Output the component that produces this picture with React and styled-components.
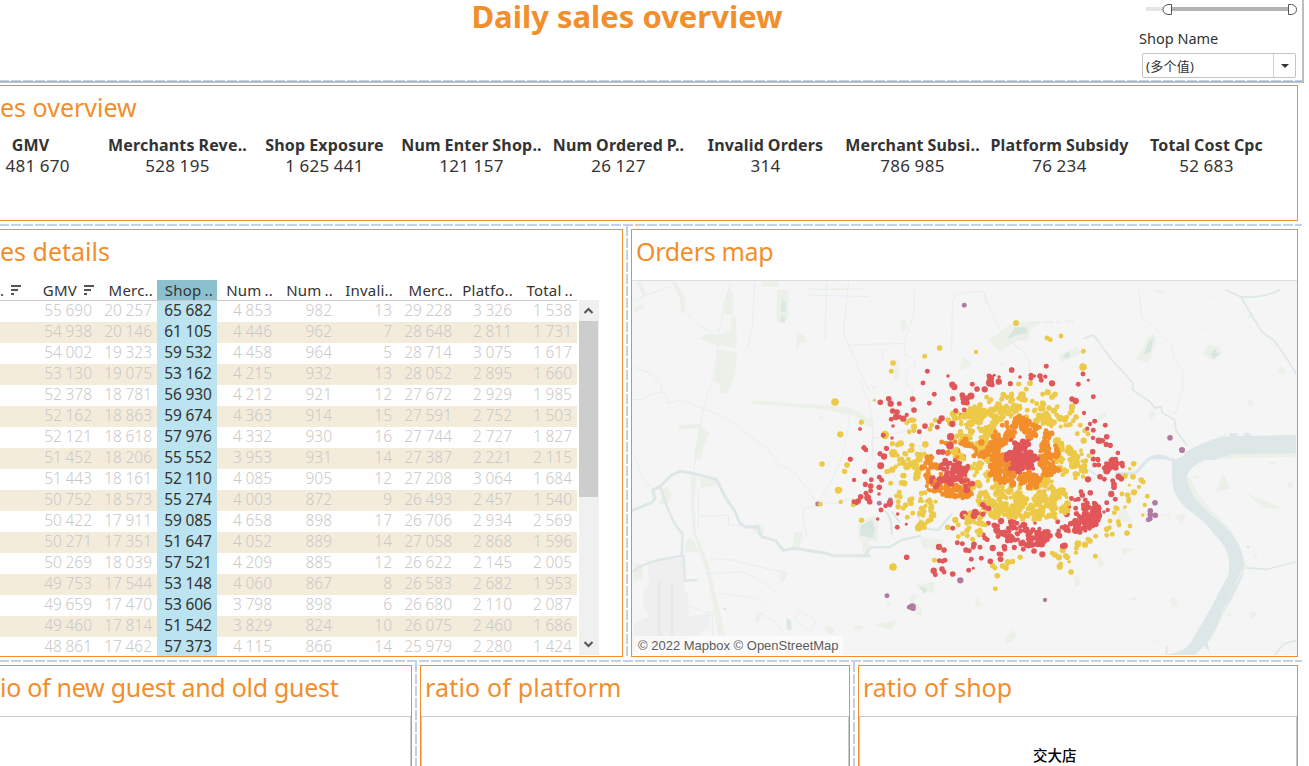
import React from "react";
import styled, { createGlobalStyle } from "styled-components";

const ORANGE = "#f28e2b";
const RED = "#e15759";
const YELLOW = "#edc948";
const PURPLE = "#b07aa1";

const Global = createGlobalStyle`
  * { box-sizing: border-box; }
  body { margin: 0; background: #fff; font-family: "Noto Sans", "Noto Sans CJK SC", sans-serif; color: #333; overflow: hidden; }
`;
const Page = styled.div`width: 1309px; height: 766px; overflow: hidden; display: flex; flex-direction: column;`;
const Header = styled.header`
  width: 1304px; height: 83px; flex: none; display: flex; justify-content: flex-end;
  border-right: 2px solid #bdbdbd; border-bottom: 2px solid #c3c3c3;
`;
const PageTitle = styled.h1`
  flex: 1; margin: 0 0 0 114px; text-align: center; color: ${ORANGE};
  font-size: 31px; line-height: 32px; font-weight: 700;
`;
const Filters = styled.div`width: 163px; margin-left: -1px; display: flex; flex-direction: column;`;
const Slider = styled.svg`display: block; width: 155px; height: 18px; margin-left: 6px;`;
const FilterLabel = styled.div`margin-top: 10px; font-size: 14.5px; line-height: 21px; white-space: nowrap;`;
const Select = styled.div`
  width: 154px; height: 25px; margin: 4px 0 0 3px; border: 1px solid #c4c4c4; border-radius: 2px;
  display: flex; font: 13px/24px "Noto Sans", "Noto Sans CJK SC", sans-serif;
`;
const SelectText = styled.span`flex: 1; padding-left: 3px; letter-spacing: 0.3px;`;
const SelectArrow = styled.span`
  width: 22px; border-left: 1px solid #d4d4d4; display: flex; align-items: center; justify-content: center;
  &::after { content: ""; border: 4px solid transparent; border-top: 4px solid #333; border-bottom: 0; }
`;
const RowDash = styled.div`
  flex: none; height: 2px; width: 1302px; margin: ${(p) => p.$m || "3px 0"}; position: relative;
  --dash: rgba(140, 165, 208, 0.52);
  background: repeating-linear-gradient(90deg, var(--dash) 0 9px, transparent 9px 11px, var(--dash) 11px 12px);
`;
const ColDash = styled.div`
  flex: none; width: 2px; margin: -3px 3px 0 3px;
  background: repeating-linear-gradient(180deg, #c2cee4 0 10px, transparent 10px 12px);
`;
const Row = styled.div`flex: none; display: flex; width: 1298px; height: ${(p) => p.$h}px;`;
const Panel = styled.section`
  flex: none; width: ${(p) => p.$w}px; height: ${(p) => p.$h}px; overflow: hidden; display: flex; flex-direction: column;
  border: 1px solid ${ORANGE}; border-left-width: ${(p) => (p.$cut ? 0 : 1)}px;
  border-bottom-width: ${(p) => (p.$open ? 0 : 1)}px;
`;
const PanelTitle = styled.h2`
  flex: none; margin: 0; height: 50px; padding-left: ${(p) => p.$x ?? 4}px;
  color: ${ORANGE}; font-size: 25px; line-height: 43px; font-weight: 400; white-space: nowrap;
  letter-spacing: ${(p) => p.$track || 0}px;
`;
const Body = styled.div`flex: 1; border: 1px solid #c8c8c8; border-width: 1px 1px 0 ${(p) => (p.$cut ? 0 : 1)}px;`;
const PieLabel = styled.div`margin: 27px 0 0 173px; color: #000; font: 500 14.5px/22px "Noto Sans CJK SC", sans-serif;`;

const Totals = styled.div`display: grid; grid-template-columns: repeat(9, 147px); margin: -1px 0 0 -43px;`;
const Total = styled.div`text-align: center; white-space: nowrap;`;
const TotalName = styled.div`font-weight: 700; font-size: 16px; line-height: 21px; word-spacing: -0.5px; letter-spacing: 0.18px;`;
const TotalValue = styled.div`font-size: 17px; line-height: 19px; word-spacing: -0.5px; letter-spacing: 0.3px;`;

const TableArea = styled.div`flex: 1; display: flex; min-height: 0;`;
const Table = styled.div`width: 577px; flex: none; overflow: hidden;`;
const TRow = styled.div`
  display: grid; grid-template-columns: 37px repeat(9, 60px); height: 21px;
  background: ${(p) => (p.$band ? "#f4ecdb" : "#fff")};
`;
const HeadRow = styled(TRow)`border-bottom: 1px solid #c8c8c8;`;
const Cell = styled.div`
  text-align: right; padding-right: 5px; font-size: 15.5px; line-height: 19px; font-weight: ${(p) => (p.$on ? 400 : 300)};
  color: ${(p) => (p.$on ? "#333" : "#c9c9c9")}; background: ${(p) => (p.$on ? "#bbe3f0" : "transparent")};
  word-spacing: -0.5px; white-space: nowrap;
`;
const HeadCell = styled(Cell)`
  color: #333; font-weight: 400; font-size: 15px; line-height: 20px; letter-spacing: 0.2px; word-spacing: -1px;
  display: flex; align-items: center; justify-content: flex-end; gap: 7px;
  padding-right: ${(p) => (p.$sort ? 3 : 4)}px; background: ${(p) => (p.$on ? "#8cc0cf" : "transparent")};
`;
const FirstHead = styled(HeadCell)`padding-right: 16px;`;
const Scroll = styled.div`width: 20px; height: 355px; margin: 20px 0 0 2px; background: #f0f0f0; display: flex; flex-direction: column;`;
const ScrollBtn = styled.svg`display: block; width: 20px; height: 21px; flex: none;`;
const Thumb = styled.div`width: 19px; height: 176px; background: #cdcdcd; margin-bottom: auto;`;

const MapBox = styled.div`height: 376px; position: relative; background: #f5f5f5; border-top: 1px solid #dedede; border-bottom: 1px solid #fff;`;
const MapSvg = styled.svg`display: block; width: 665px; height: 374px;`;
const Credit = styled.div`
  position: absolute; left: 2px; bottom: 0; height: 19px; padding: 0 4px; background: rgba(255,255,255,.6);
  color: #5c5c5c; font: 13px/19px "Liberation Sans", Arial, sans-serif; white-space: nowrap;
`;

const totals = [
  ["GMV", "1 481 670"], ["Merchants Reve..", "528 195"], ["Shop Exposure", "1 625 441"],
  ["Num Enter Shop..", "121 157"], ["Num Ordered P..", "26 127"], ["Invalid Orders", "314"],
  ["Merchant Subsi..", "786 985"], ["Platform Subsidy", "76 234"], ["Total Cost Cpc", "52 683"],
];
const heads = ["GMV", "Merc..", "Shop ..", "Num ..", "Num ..", "Invali..", "Merc..", "Platfo..", "Total .."];
const rows = `55690 20257 65682 4853 982 13 29228 3326 1538
54938 20146 61105 4446 962 7 28648 2811 1731
54002 19323 59532 4458 964 5 28714 3075 1617
53130 19075 53162 4215 932 13 28052 2895 1660
52378 18781 56930 4212 921 12 27672 2929 1985
52162 18863 59674 4363 914 15 27591 2752 1503
52121 18618 57976 4332 930 16 27744 2727 1827
51452 18206 55552 3953 931 14 27387 2221 2115
51443 18161 52110 4085 905 12 27208 3064 1684
50752 18573 55274 4003 872 9 26493 2457 1540
50422 17911 59085 4658 898 17 26706 2934 2569
50271 17351 51647 4052 889 14 27058 2868 1596
50269 18039 57521 4209 885 12 26622 2145 2005
49753 17544 53148 4060 867 8 26583 2682 1953
49659 17470 53606 3798 898 6 26680 2110 2087
49460 17814 51542 3829 824 10 26075 2460 1686
48861 17462 57373 4115 866 14 25979 2280 1424`.split("\n").map((l) => l.split(" "));
const fmt = (v) => v.replace(/(\d)(\d{3})$/, "$1 $2");

/* Order locations, per map tile: "x,y[,radius]" in tile units (three per pixel). */
const tiles = [
  { x: 630, y: 270, dots: [
    [PURPLE, "563,702,7"],
    [YELLOW, "615,396,11 694,457 631,493,9 576,582,8 651,585,8 643,604 625,661,10 632,696,6 571,703 670,704 694,751"],
    [RED, "690,477,5 702,534 707,539,6 661,568 704,604 672,630,6 706,643"],
  ] },
  { x: 860, y: 290, dots: [
    [PURPLE, "313,46,7"],
    [YELLOW, "468,99,8 239,174,8 194,199 348,186,6 99,219,8 94,244 43,331,4 4,397 75,435,12 380,322 393,329 388,335 430,314,8 425,328 440,322 452,320,8 455,312 462,345 475,283,6 476,325 468,350,10 465,365 421,353,8 420,368 435,366 155,390,8 162,391 148,392 140,398 162,410,9 162,422 148,425 215,405 210,418 226,391 97,461 122,460,9 112,465 155,466 196,463,9 100,490,12 137,493 172,493 157,481 125,507 145,508 175,503 280,372,10 265,390,8 270,400,8 285,385,9 292,368 330,357 318,365 360,345,8 358,358 360,370,9"],
    [ORANGE, "245,456 258,460 272,458 285,455 302,460 320,450 265,486 290,484,11 201,501,8 262,491 311,500 475,395,9 465,405 455,410 440,398 427,406"],
    [RED, "202,244 264,258,5 189,279 277,284,9 283,291,9 337,283 351,297,8 374,298,9 455,240 387,258 392,265,10 390,278,12 397,285 417,261,5 403,256,4 416,275,9 451,281 223,313 86,326,8 92,341,9 61,337,8 118,341 158,327,8 208,340 278,326,8 307,315,8 308,326 320,325,9 333,318,10 311,337,8 321,338,8 162,360,8 98,363,8 111,366,8 94,388 108,381,9 118,381 130,386,9 140,375,6 99,408,5 195,408,8 178,425 245,385,9 232,412 238,395 287,362 277,402,9 305,376 313,360 96,444,5 80,476 60,491 72,500,8 70,436 12,473 18,480,6 0,417,5 237,486 249,486 272,440,11 270,467,11 298,500"],
  ] },
  { x: 1000, y: 290, dots: [
    [PURPLE, "510,443,8 546,480,8"],
    [YELLOW, "48,99,8 141,144 151,149 183,138 250,184 249,231,11 57,282 90,280,8 79,298 10,313 22,322 35,315 66,315,11 75,330 128,313 143,307,9 165,313,8 156,321,8 97,334 110,341 128,339,8 127,358 172,350 162,362,9 180,385,10 216,350,9 215,362,8 210,370 200,382 228,381,8 220,392 241,406 232,431 254,422 264,432 251,452,9 211,403 170,375 115,375 105,360 82,361 103,363 122,380 145,390,12 155,398,10 60,355 50,363 40,350,8 38,330 5,360,9 3,385,9"],
    [RED, "35,240,8 139,229 60,261,5 93,256 93,265 103,258,5 120,258,8 136,260,6 124,271 156,280,9 31,281 249,252 235,283 265,271,4 216,327,8 227,333,9 280,320 252,369,6 284,394 316,406 270,402,6 262,416,6 280,421 279,444,6 296,452,9 308,452 320,440,8 319,463 331,467 354,489,6 278,485,8 280,507 293,508 337,508 347,508 31,446,9 87,444,9 80,458,8 0,275,5"],
  ] },
  { x: 840, y: 440, dots: [
    [PURPLE, "118,190,7 151,180 150,195 361,421,9 141,467,7 208,502 217,500,10 219,505,8"],
    [YELLOW, "157,11 173,14 183,10 160,40,12 213,30 217,17 256,13,9 178,60 190,68,9 212,72,10 200,80,10 230,75 235,60,8 223,65 241,60 243,87 21,75 14,95 2,150,5 40,194 152,130 185,128,8 193,130,9 157,89,9 145,94 140,95 170,168 178,157 181,170 175,185 210,180,8 213,190,8 197,195,8 175,200,8 190,205 216,176 218,220 202,232 65,241 323,262,8 346,240,9 355,255 380,250 355,290 368,281 382,287 398,298 417,285 283,361 159,381,11 458,377,8 465,384 488,378,8 503,366,8 518,365 498,385 472,407,8 466,446 540,352"],
    [RED, "72,24 78,30,6 31,58 120,42 132,49,9 139,25 122,77,10 73,95 42,120,5 118,112 125,121 76,134 92,138,8 94,119 118,142,8 92,152 78,160 117,162,5 62,170,8 83,173,10 55,183,8 42,185 50,188 89,185,8 150,188,9 137,197 123,210 173,222,5 113,237,5 172,262 199,253,4 296,36,8 308,36,8 338,265 297,321,9 312,330,8 315,361 308,364 298,362 281,392,9 286,404 306,387,8 312,396 338,402,8 352,308 367,311 378,330,8 388,332 402,313,8 400,322 420,322 394,358 424,355 451,364,8 386,391 400,385,4 200,352,8 458,324,9 493,320 494,328 477,342 482,358,8 523,323 463,256,8 470,270,10 485,280,9 445,250 513,245,9 530,250 500,290 508,300,6 515,298 528,300,5 530,280,6 518,265 505,265 435,295 430,285 442,299 372,225,13"],
    [YELLOW, "374,226,4"],
  ] },
  { x: 1000, y: 440, dots: [
    [PURPLE, "465,188,8 451,212,8 451,224,8 466,226,8 451,236 445,239 546,30,8 135,480,6"],
    [YELLOW, "401,71,8 389,86,5 375,108,8 399,110,8 388,136,4 424,120,8 430,126 417,141,6 402,157,9 366,162 383,165,8 386,178 386,184 442,169 434,195,6 428,225,5 347,203 352,206 343,218 375,201,5 330,243 355,245 357,255 390,258 328,263 320,268,8 320,286 337,283 381,279,8 287,289 270,303,8 264,298 234,311,10 255,314,9 229,325 228,338,6 286,349 213,396,8 188,330,9 197,347,8 202,352,8 207,365,5 182,372 179,380,9 165,345,8 177,352,9 157,340 61,352 38,364 24,367,9 18,383,8 8,378"],
    [RED, "302,2,8 318,14 331,16 353,39,6 278,35 280,58 294,60 284,75 296,75 320,93,10 300,110,8 264,118,9 313,118 338,122 356,110,9 364,116,8 342,133,8 342,142,8 334,162,9 346,178 271,158,8 243,155 247,165,8 235,178 256,180 262,190 206,200 227,205 250,195 255,205,11 293,203,10 320,188 323,210,6 312,216,5 293,215,10 118,218 200,222,9 127,343,9 102,333,8 70,328 13,320,8 43,322 3,343 0,357 194,317,9 188,318,8 173,245 3,243,9 42,247 72,255,9 78,269,10 42,262 105,249,5 62,273 14,282,9 27,274 30,290,10 53,282 22,303 33,302 45,300"],
  ] },
];

/* Dense districts: colour, centre, radii, rotation, point count. */
const districts = [
  [YELLOW, 982, 418, 14, 12, 0, 40], [YELLOW, 978, 428, 20, 20, 0, 95], [YELLOW, 1022, 411, 29, 13, 0, 50],
  [YELLOW, 1052, 421, 18, 7, .2, 28], [YELLOW, 1074, 462, 16, 18, 0, 52], [YELLOW, 1059, 450, 4, 20, 0, 24],
  [YELLOW, 1001, 501, 23, 17, 0, 150], [YELLOW, 1020, 513, 28, 8, 0, 60], [YELLOW, 1050, 503, 20, 14, -.3, 80], [YELLOW, 1035, 490, 30, 10, 0, 70],
  [YELLOW, 927, 509, 11, 20, 0, 40], [YELLOW, 976, 523, 12, 9, 0, 30], [YELLOW, 910, 465, 20, 13, .3, 20],
  [YELLOW, 970, 452, 22, 16, 0, 34], [YELLOW, 980, 475, 9, 14, 0, 18],
  [ORANGE, 1004, 438, 15, 7, -.8, 54], [ORANGE, 1022, 423, 12, 6, .2, 40], [ORANGE, 1035, 431, 16, 6, .4, 48],
  [ORANGE, 993, 450, 7, 11, 0, 34], [ORANGE, 1049, 457, 10, 18, 0, 95], [ORANGE, 1003, 468, 13, 14, 0, 120], [ORANGE, 1022, 479, 24, 6, 0, 65],
  [ORANGE, 968, 451, 22, 12, -.2, 26], [ORANGE, 932, 474, 10, 19, 0, 42], [ORANGE, 952, 491, 20, 6, .15, 62], [ORANGE, 964, 489, 8, 13, 0, 30],
  [RED, 1021, 456, 13, 15, .2, 115], [RED, 1030, 463, 10, 8, 0, 28], [RED, 1011, 456, 8, 6, 0, 12],
  [RED, 950, 472, 16, 12, 0, 50], [RED, 964, 474, 10, 14, 0, 22], [RED, 935, 483, 8, 7, 0, 8], [RED, 979, 511, 7, 7, 0, 8],
  [RED, 1114, 465, 13, 3.5, -.1, 24], [RED, 1080, 522, 21, 7, -.35, 66], [RED, 1095, 513, 5, 13, .2, 18],
  [RED, 1045, 535, 20, 8, -.35, 40], [RED, 1030, 543, 9, 4, 0, 16], [RED, 1018, 531, 30, 9, 0, 22], [RED, 1083, 507, 11, 12, 0, 12],
];
let seed = 7;
const rnd = () => { seed = (seed * 16807) % 2147483647; return seed / 2147483647; };
/* Orders gather round a few spots in each district, which leaves small gaps between them. */
const dense = districts.flatMap(([c, cx, cy, rx, ry, a, n]) => {
  const spots = [];
  return Array.from({ length: n }, (_, i) => {
    let u, v;
    if (i % 2 && spots.length) {
      const s = spots[Math.floor(rnd() * spots.length)];
      u = s[0] + (rnd() - 0.5) * 8;
      v = s[1] + (rnd() - 0.5) * 8;
    } else {
      const t = rnd() * Math.PI * 2, q = Math.sqrt(rnd());
      u = Math.cos(t) * q * rx;
      v = Math.sin(t) * q * ry;
      spots.push([u, v]);
    }
    return { c, x: cx + u * Math.cos(a) - v * Math.sin(a), y: cy + u * Math.sin(a) + v * Math.cos(a), r: 1.9 + rnd() * rnd() * 2 };
  });
});

function Terrain() {
  const water = { fill: "none", stroke: "#dee7e8", strokeLinejoin: "round", strokeLinecap: "round" };
  const road = { fill: "none", stroke: "#e6eceb", strokeWidth: 2.6 };
  return (
    <>
      <g transform="translate(630 270) scale(.33333)">
        <path fill="#efefef" d="M50 870 160 865 164 965 175 968 175 1040 240 1030 240 1065 200 1100 10 1130 10 1060 60 1040 40 1010 40 955 58 950Z" />
        <path stroke="#e9e9e9" strokeWidth="9" fill="none" d="M88 930V1100M126 935V1100" />
        <path fill="#ebf0e9" d="M124 36 140 36 165 85 165 125 153 128 150 82ZM294 55 311 70 307 135 281 133ZM303 138 318 138 320 234 262 226 210 208 230 190 262 198 302 180ZM262 237 320 248 317 310 290 374 268 366 272 342 253 338ZM366 390 660 412 700 435 718 450 718 470 680 440 580 418 364 402ZM147 466 205 460 236 490 222 530 212 570 192 566 195 540 206 505 205 475 148 478ZM182 614 200 618 192 700 198 790 232 870 250 940 266 1010 286 1097 265 1097 246 990 230 910 190 790 183 700ZM210 625 260 625 270 645 212 655ZM97 655 115 650 125 680 110 706 84 700 98 680ZM168 810 185 803 208 845 165 845ZM360 770 385 760 405 780 390 800ZM493 785 518 785 510 835 487 830ZM10 880 38 882 38 925 10 935ZM441 58 476 62 474 145 462 160 440 155ZM395 33 444 33 444 50 395 48ZM503 188 518 195 534 216 510 215 505 240 496 238ZM20 36 34 34 48 75 38 78ZM10 115 40 102 45 112 15 130ZM380 1030 396 1025 386 1060 375 1058ZM452 908 475 906 460 937 450 930ZM568 438 580 438 580 452 568 452ZM690 760 718 740 718 858 700 855ZM585 1072 600 1068 615 1078 610 1092 592 1090ZM672 1068 705 1068 690 1083ZM535 55 700 55 700 60 535 60Z" />
        <path fill="#dce9e2" d="M455 90 470 95 468 125 452 124ZM453 138 465 138 465 160 452 157ZM695 765 718 750 718 800 697 795ZM468 1045 483 1050 485 1080 472 1080ZM276 1015 290 1012 288 1023Z" />
        <path {...road} d="M10 92 70 67 125 48M165 125C190 155 225 180 262 200M303 35 285 95 272 165 263 200 262 260 248 330 220 412 205 500 190 614M374 35 367 165 352 235M10 290 60 310 95 345 90 366 60 375 38 390 10 388M90 366 105 372 116 400 155 388 200 410 245 425 285 442 345 487 415 540 446 582 490 605 520 642 555 690 610 702 665 690 718 680M660 412 655 470 637 560 600 640 567 692 555 710 520 715 520 750 530 790 505 825M590 36 584 210M656 36 640 190 718 365M535 75 718 80M650 225H720M10 548 40 630 73 662M205 660V775L190 770M210 740 295 735 295 765 340 768M238 865 310 870 360 885 470 908M225 912 340 905 395 935 440 965M262 968 380 985 408 1010M392 1028 440 1060 465 1097M170 1007 210 1020 220 1027 247 1028 247 1097M496 1040 510 1023 560 1050 540 1085 500 1055Z" />
        <path {...water} strokeWidth="9" d="M10 720 65 698 75 685 68 660 90 650 125 615 150 604 180 608 260 628 285 680 315 725 330 760 347 771 383 770 395 800 437 812 460 842 490 835 590 850 610 857 718 857" />
        <path {...water} strokeWidth="7" d="M92 655C108 700 120 750 158 792L155 855M10 902 40 885 85 870 160 857 165 932 200 930" />
      </g>
      <g transform="translate(860 290) scale(.33333)">
        <path fill="#ebf0e9" d="M123 90 138 92 142 118 125 125ZM66 178H71V208H66ZM103 212H116V271H103ZM308 202 320 205 332 218 330 232 297 240ZM387 150 450 105 480 110 480 148 420 185ZM370 2 384 38 375 43ZM0 375 38 388 38 412 0 400ZM32 284 48 290 40 298Z" />
        <path fill="#d9e8e2" d="M440 145 458 118 480 118 480 135 460 128 445 147Z" />
        <path {...road} d="M0 163 132 161 162 70V0M132 161 135 197C160 198 170 212 165 228C130 232 136 262 142 286 165 292 158 310 150 365M275 190 277 35 288 12 370 3 395 70 420 120 480 180M0 268 25 335 38 400V510M38 446 155 418M185 410 182 450" />
      </g>
      <g transform="translate(1000 290) scale(.33333)">
        <path fill="#ebf0e9" d="M0 125 35 100 85 93 130 94 95 115 82 152 40 150 0 184ZM132 92H162V100H132ZM168 92H180V100H168ZM195 88 222 92 222 98 197 98ZM175 195 232 170 242 190 185 217ZM440 145 465 128 468 155 446 218 405 207 430 175ZM606 190 625 165 655 168 668 190 640 212ZM845 230 860 243 847 255 831 243ZM752 326 764 338 752 350 741 338ZM455 357 467 374 452 391 443 374ZM297 375 316 363 318 380 297 392ZM455 0H492L488 12ZM628 12 645 20 640 25ZM738 80 755 70 765 76 745 87ZM610 116 620 112 622 120ZM640 440 680 433 675 445ZM640 508 710 488 888 486 888 500 700 505ZM0 216 15 220 0 230Z" />
        <path fill="#d7e6df" d="M25 140 45 112 80 112 83 130 50 135 25 148ZM190 197 205 185 212 198 200 207ZM445 158 460 145 452 185 430 195ZM622 188 632 192 645 178 650 188 660 190 652 196 640 208 636 198Z" />
        <path {...road} d="M416 0 425 80 470 120 515 165 525 210 548 240 548 300 525 372 500 360M25 150 70 185 88 215 88 245" />
        <path {...water} strokeWidth="5" d="M253 145 280 135 340 215 378 255 398 280 398 300 450 335 465 355 483 350 487 368 525 390 527 420 560 465M678 0 722 20 755 75 785 125 820 150 850 190 888 250M722 20C760 25 800 18 840 0" />
        <path fill="#dde7e7" d="M448 508C475 485 500 495 515 510H560L550 488C600 465 640 435 720 438L888 435V490L700 492 640 510ZM688 430H712V438H688ZM733 430H752V438H733Z" />
      </g>
      <g transform="translate(840 440) scale(.33333)">
        <path fill="#ebf0e9" d="M55 245 100 228 115 235 112 305 55 300ZM240 290 310 300 308 330 250 325ZM225 435 285 425 280 460 255 455ZM205 470 232 463 222 485 245 500 245 530 225 520ZM405 500 410 470 420 485 425 500ZM100 555 168 540 155 570ZM235 15 258 20 258 38 240 38ZM42 555 75 562 45 570ZM138 485 158 490 145 500Z" />
        <path fill="#d7e6df" d="M65 255 95 240 105 265 98 295 58 285ZM235 440 260 445 255 462Z" />
        <path {...road} d="M95 0 98 35 80 70V95M170 0V25M0 180 40 175M158 90 175 130 170 165" />
        <path {...water} strokeWidth="7" d="M0 347H75L90 322 150 321 185 300 240 288M138 215C155 235 155 255 155 280M157 217 178 245M232 225 255 265 295 270 335 222" />
      </g>
      <g transform="translate(1000 440) scale(.33333)">
        <path {...water} strokeWidth="5" d="M250 80 290 105M732 383 800 388 840 378 885 366M825 645 850 612 888 602M500 620V645" />
        <path {...water} strokeWidth="9" d="M350 100H405C430 80 440 45 480 48L525 62" />
        <path fill="#dde7e7" d="M515 65 640 0H888V38H690C610 55 560 80 562 115C568 155 590 175 620 200C665 240 690 265 705 295C725 325 733 350 732 385C730 425 690 480 665 535L622 610C625 620 630 640 635 642L612 617 585 645H495C580 630 570 600 600 560C630 510 650 470 685 405C690 360 690 330 640 280C600 220 550 215 525 160C515 135 517 110 515 65ZM737 320 750 316 745 328Z" />
        <path fill="#ebf0e9" d="M562 115 572 112C580 155 620 190 640 220 690 260 720 320 740 382L728 400 733 370C725 310 690 270 640 230 590 190 565 155 562 115ZM690 42H888V48H690ZM648 155 668 98 692 145ZM525 228 558 222 545 255ZM370 200 400 248 345 240ZM365 325 410 325 370 345ZM288 355 300 345 314 375 298 384ZM222 410 235 408 242 435 224 440ZM760 355 768 338 772 350ZM745 520 760 512 772 525 755 535ZM12 600 40 568 52 590 20 612ZM378 478 410 472 408 480ZM510 480 520 470 535 490 520 505ZM432 605 475 602 475 606ZM735 158 848 205 790 203ZM575 110 592 105 590 118ZM808 66H827V75H808ZM862 130 878 126 878 145 865 145ZM470 230 512 220 510 228ZM720 398 735 382 710 430 665 520 640 590 625 605 665 535ZM680 515 697 525 685 530Z" />
      </g>
    </>
  );
}

function Dots() {
  const all = [];
  tiles.forEach((t) => t.dots.forEach(([c, s]) => s.split(" ").forEach((p) => {
    const [x, y, r = 7] = p.split(",").map(Number);
    all.push({ c, x: t.x + x / 3, y: t.y + y / 3, r: r / 3 + 0.15 });
  })));
  return [...all, ...dense].map((d, i) => <circle key={i} cx={d.x.toFixed(1)} cy={d.y.toFixed(1)} r={d.r.toFixed(2)} fill={d.c} />);
}

const SortIcon = () => (
  <svg width="10" height="10" viewBox="0 0 10 10" shapeRendering="crispEdges"><path fill="#555" d="M0 0h10v2H0zM0 4h7v2H0zM0 8h3v2H0z" /></svg>
);

export default function App() {
  return (
    <Page>
      <Global />
      <Header>
        <PageTitle>Daily sales overview</PageTitle>
        <Filters>
          <Slider viewBox="0 0 155 18">
            <path fill="#e5e5e5" d="M1 7h18v4H1z" /><path fill="#b3b3b3" d="M27 7h116v4H27z" />
            <path fill="#fff" stroke="#555" d="M26.500 4.500H23q-5 1-5 5t5 5h3.500zM143.500 4.500h3q5 1 5 5t-5 5h-3z" />
          </Slider>
          <FilterLabel>Shop Name</FilterLabel>
          <Select><SelectText>(多个值)</SelectText><SelectArrow /></Select>
        </Filters>
      </Header>
      <RowDash $m="-3px 0 3px" />
      <Row $h={136}>
        <Panel $w={1298} $h={136} $cut>
          <PanelTitle $x={0}>es overview</PanelTitle>
          <Totals>
            {totals.map(([n, v]) => <Total key={n}><TotalName>{n}</TotalName><TotalValue>{v}</TotalValue></Total>)}
          </Totals>
        </Panel>
      </Row>
      <RowDash />
      <Row $h={428}>
        <Panel $w={623} $h={428} $cut>
          <PanelTitle $x={0}>es details</PanelTitle>
          <TableArea>
            <Table>
              <HeadRow>
                <FirstHead>.<SortIcon /></FirstHead>
                {heads.map((h, i) => <HeadCell key={i} $on={i === 2} $sort={i === 0}>{h}{i === 0 && <SortIcon />}</HeadCell>)}
              </HeadRow>
              {rows.map((r, i) => (
                <TRow key={i} $band={i % 2 === 1}>
                  <span />
                  {r.map((v, j) => <Cell key={j} $on={j === 2}>{fmt(v)}</Cell>)}
                </TRow>
              ))}
            </Table>
            <Scroll>
              <ScrollBtn viewBox="0 0 20 21"><path d="M5.500 13 9.500 9l4 4" fill="none" stroke="#555" strokeWidth="2" /></ScrollBtn>
              <Thumb />
              <ScrollBtn viewBox="0 0 20 21"><path d="M5.500 8 9.500 12l4-4" fill="none" stroke="#555" strokeWidth="2" /></ScrollBtn>
            </Scroll>
          </TableArea>
        </Panel>
        <ColDash />
        <Panel $w={667} $h={428}>
          <PanelTitle $track={-0.3}>Orders map</PanelTitle>
          <MapBox>
            <MapSvg viewBox="632 281 665 374"><Terrain /><Dots /></MapSvg>
            <Credit>© 2022 Mapbox © OpenStreetMap</Credit>
          </MapBox>
        </Panel>
      </Row>
      <RowDash />
      <Row $h={101}>
        <Panel $w={412} $h={101} $cut $open><PanelTitle $x={0} $track={-0.28}>io of new guest and old guest</PanelTitle><Body $cut /></Panel>
        <ColDash />
        <Panel $w={430} $h={101} $open><PanelTitle $track={0.18}>ratio of platform</PanelTitle><Body /></Panel>
        <ColDash />
        <Panel $w={440} $h={101} $open><PanelTitle>ratio of shop</PanelTitle><Body><PieLabel>交大店</PieLabel></Body></Panel>
      </Row>
    </Page>
  );
}
